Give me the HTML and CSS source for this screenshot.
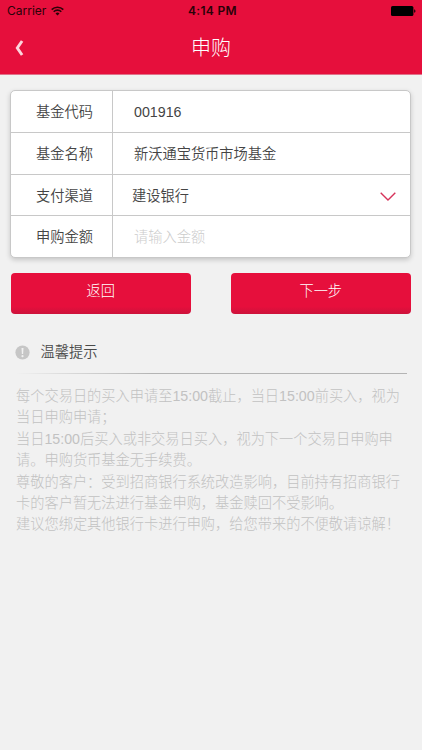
FILE: index.html
```html
<!DOCTYPE html>
<html lang="zh-CN">
<head>
  <meta charset="UTF-8">
  <meta name="viewport" content="width=device-width, initial-scale=1">
  <title>申购</title>
  <link rel="stylesheet" href="styles.css">
</head>
<body>

<header class="header">
  <div class="status">
    <div class="carrier">
      <span>Carrier</span>
      <svg class="wifi" width="13" height="10" viewBox="0 0 13 10" fill="none" stroke="#2a0208" stroke-width="1.6">
        <path d="M.7 3.6a8.2 8.2 0 0 1 11.6 0M2.7 5.7a5.4 5.4 0 0 1 7.6 0"/>
        <path d="M6.5 9.5L4.5 7.4a2.9 2.9 0 0 1 4 0z" fill="#2a0208" stroke="none"/>
      </svg>
    </div>
    <span class="time">4:14 PM</span>
    <svg class="battery" width="25" height="10" viewBox="0 0 25 10">
      <rect width="22.4" height="10" rx="1.6"/>
      <path d="M23.2 3.2c1.7.4 1.7 3.2 0 3.6z"/>
    </svg>
  </div>
  <div class="navbar">
    <svg class="back" width="9" height="16" viewBox="0 0 9 16" fill="none" stroke="#fcd5dc" stroke-width="2.9">
      <path d="M7.1 1L2.3 8l4.8 7"/>
    </svg>
    <h1>申购</h1>
  </div>
</header>

<main>
  <form class="form">
    <div class="row">
      <label>基金代码</label>
      <div class="value">001916</div>
    </div>
    <div class="row">
      <label>基金名称</label>
      <div class="value">新沃通宝货币市场基金</div>
    </div>
    <div class="row">
      <label>支付渠道</label>
      <div class="value select">
        <span>建设银行</span>
        <svg width="16" height="9" viewBox="0 0 16 9" fill="none" stroke="#d6335a" stroke-width="1.4">
          <path d="M.7.7L8 7.9 15.3.7"/>
        </svg>
      </div>
    </div>
    <div class="row">
      <label>申购金额</label>
      <div class="value placeholder">请输入金额</div>
    </div>
  </form>

  <div class="buttons">
    <button type="button">返回</button>
    <button type="button">下一步</button>
  </div>

  <!-- 温馨提示 -->
  <section class="tips">
    <div class="tips-title">
      <svg width="15" height="15" viewBox="0 0 15 15">
        <circle cx="7.5" cy="7.5" r="7.1" fill="#c6c6c6"/>
        <path d="M6.5 2.9h2l-.4 6h-1.2z" fill="#f1f1f1"/>
        <circle cx="7.5" cy="11.2" r="1.1" fill="#f1f1f1"/>
      </svg>
      <h2>温馨提示</h2>
    </div>
    <div class="line"></div>
    <p>每个交易日的买入申请至15:00截止，当日15:00前买入，视为<br>当日申购申请；</p>
    <p>当日15:00后买入或非交易日买入，视为下一个交易日申购申<br>请。申购货币基金无手续费。</p>
    <p>尊敬的客户：受到招商银行系统改造影响，目前持有招商银行<br>卡的客户暂无法进行基金申购，基金赎回不受影响。</p>
    <p>建议您绑定其他银行卡进行申购，给您带来的不便敬请谅解！</p>
  </section>
</main>

</body>
</html>
```

FILE: styles.css
```css
* {
    box-sizing: border-box;
}

body {
    margin: 0;
    min-height: 750px;
    background: #f1f1f1;
    color: #444;
    font: 300 14.22px "Liberation Sans", "Noto Sans CJK SC", sans-serif;
}

.header {
    height: 75px;
    background: #e60f3c;
    border-bottom: 1px solid #e0728a;
}

.status {
    display: grid;
    grid-template-columns: 1fr auto 1fr;
    align-items: center;
    height: 22px;
    padding: 0 6px 0 7px;
    color: #2a0208;
    font: 12px/22px Inter, sans-serif;
}

.carrier {
    display: flex;
    align-items: center;
    gap: 5px;
}

.time {
    padding-left: 2px;
    font-weight: 600;
    letter-spacing: .3px;
}

.battery {
    justify-self: end;
}

.navbar {
    display: grid;
    grid-template-columns: 1fr auto 1fr;
    align-items: center;
    height: 52px;
    padding: 0 15px;
}

h1 {
    margin: 0;
    color: #fff;
    font-size: 20px;
    font-weight: 300;
    line-height: 52px;
}

.form {
    margin: 15px 11px 0 10px;
    border: 1px solid #c8c8c8;
    border-radius: 5px;
    background: #fff;
    box-shadow: 0 2px 5px rgba(0, 0, 0, .18);
    font-weight: 350;
}

.row {
    display: flex;
    height: 41px;
    line-height: 43px;
}

.row:nth-child(even) {
    height: 42px;
}

.row + .row {
    border-top: 1px solid #c8c8c8;
}

.row label {
    width: 102px;
    padding-left: 25px;
    border-right: 1px solid #c8c8c8;
}

.value {
    flex: 1;
    padding-left: 21px;
}

.select {
    display: flex;
    justify-content: space-between;
    padding: 0 14px 0 19px;
}

.select svg {
    margin-top: 17px;
}

.placeholder {
    color: #ccc;
    font-weight: 300;
}

.buttons {
    display: flex;
    justify-content: space-between;
    margin: 15px 11px 0 10.5px;
}

button {
    width: 180.5px;
    height: 41px;
    padding: 0 0 7px;
    border: 0;
    border-radius: 4px;
    background: linear-gradient(#e60f3c 82%, #cc123b);
    color: #fff;
    font: inherit;
}

.tips {
    margin: 28px 15px 0 16px;
    color: #c2c2c2;
    line-height: 21.4px;
}

.tips-title {
    display: flex;
    align-items: center;
    gap: 10.5px;
    height: 22px;
}

.tips-title svg {
    margin: 0 0 2px -1px;
}

h2 {
    margin: 0;
    color: #4a4a4a;
    font-size: 14.22px;
    font-weight: 350;
}

.line {
    height: 1px;
    margin: 9px 0 12px;
    background: linear-gradient(to right, #f1f1f1, #b4b4b4 35%);
}

p {
    margin: 0;
    white-space: nowrap;
}
```
